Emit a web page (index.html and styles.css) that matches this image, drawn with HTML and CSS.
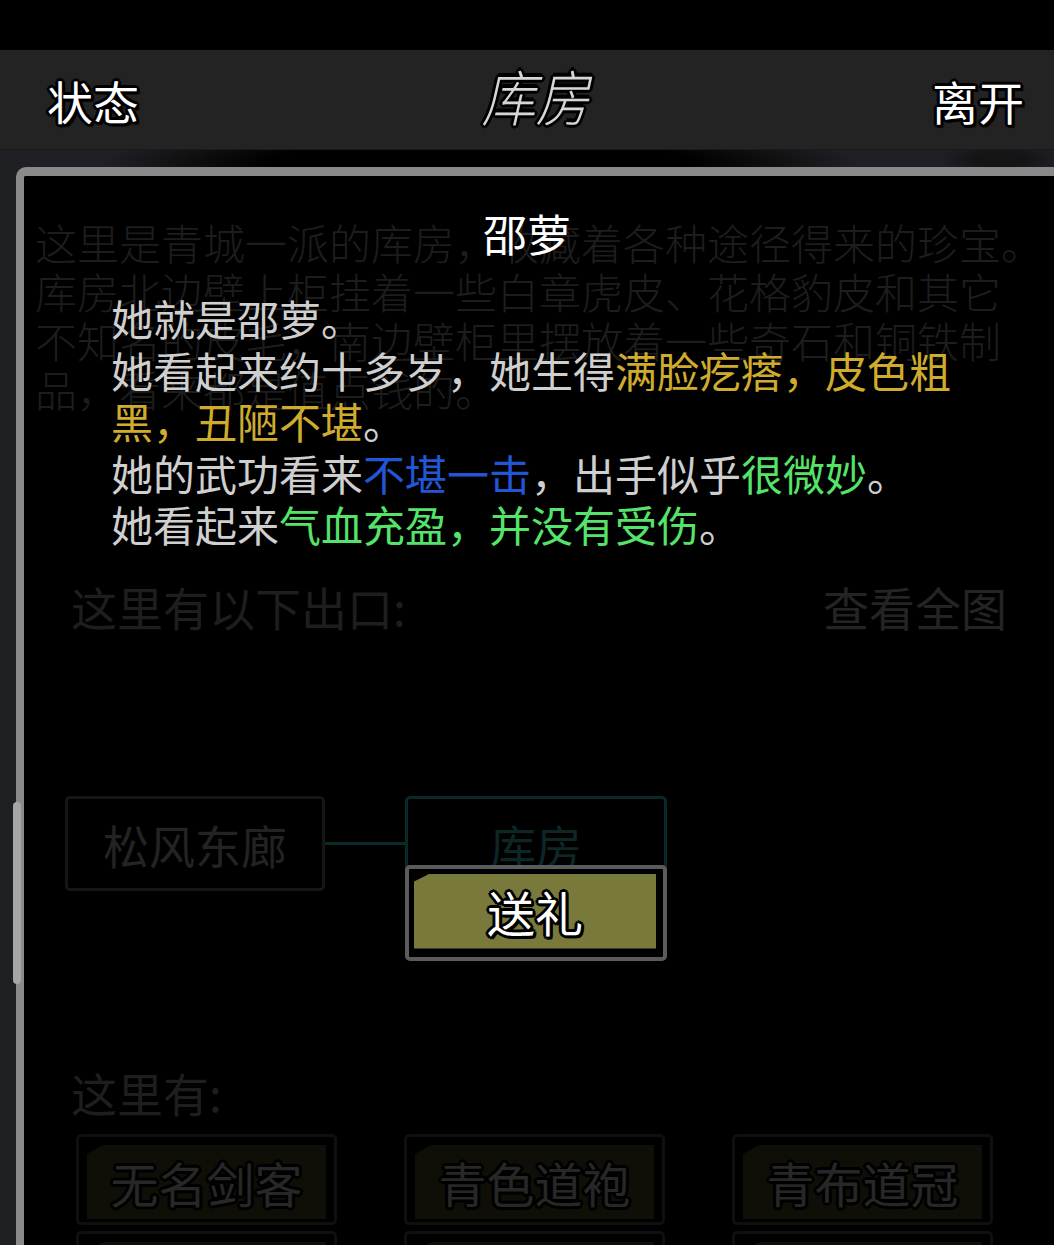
FILE: index.html
```html
<!DOCTYPE html>
<html lang="zh-CN">
<head>
<meta charset="utf-8">
<title>库房</title>
<link rel="stylesheet" href="styles.css">
</head>
<body>
<div class="screen">
  <div class="statusbar"></div>
  <header class="topbar">
    <span class="nav-btn">状态</span>
    <span class="room-title">库房</span>
    <span class="nav-btn">离开</span>
  </header>
  <main class="panel">
    <div class="scroll-thumb"></div>
    <p class="desc">这里是青城一派的库房，收藏着各种途径得来的珍宝。<br>库房北边壁上柜挂着一些白章虎皮、花格豹皮和其它<br>不知名的皮毛，南边壁柜里摆放着一些奇石和铜铁制<br>品，看来都是值点钱的。</p>
    <div class="exits"><span>这里有以下出口:</span><span class="fullmap">查看全图</span></div>
    <div class="map">
      <div class="map-room">松风东廊</div>
      <div class="map-link"></div>
      <div class="map-room current">库房</div>
    </div>
    <div class="here">这里有:</div>
    <div class="items">
      <div class="item"><div class="item-face">无名剑客</div></div>
      <div class="item"><div class="item-face">青色道袍</div></div>
      <div class="item"><div class="item-face">青布道冠</div></div>
      <div class="item"><div class="item-face">&nbsp;</div></div>
      <div class="item"><div class="item-face">&nbsp;</div></div>
      <div class="item"><div class="item-face">&nbsp;</div></div>
    </div>
  </main>
  <div class="modal">
    <div class="modal-title">邵萝</div>
    <p class="modal-text">她就是邵萝。<br>她看起来约十多岁，她生得<span class="y">满脸疙瘩，皮色粗黑，丑陋不堪</span>。<br>她的武功看来<span class="b">不堪一击</span>，出手似乎<span class="g">很微妙</span>。<br>她看起来<span class="g">气血充盈，并没有受伤</span>。</p>
    <div class="modal-actions">
      <div class="btn"><div class="btn-face">送礼</div></div>
    </div>
  </div>
</div>
</body>
</html>
```
FILE: styles.css
```css
html, body {
  margin: 0;
  padding: 0;
  background: #1f2024;
}
.screen {
  position: relative;
  width: 1054px;
  height: 1245px;
  overflow: hidden;
  font-family: "Noto Sans CJK SC", "Noto Sans", sans-serif;
  background:
    radial-gradient(ellipse 380px 40px at 480px 162px, #000 55%, rgba(0,0,0,0) 100%),
    radial-gradient(ellipse 60px 20px at 1000px 160px, #141417 40%, rgba(0,0,0,0) 100%),
    #1f2024;
}
.statusbar {
  height: 50px;
  background: #000;
}
.topbar {
  height: 100px;
  box-sizing: border-box;
  background: #232323;
  border-bottom: 1px solid #1a1a1a;
  display: flex;
  align-items: center;
  justify-content: space-between;
  padding: 0 30px 0 47px;
}
.nav-btn {
  font-size: 46px;
  line-height: 56px;
  color: #fff;
  text-shadow:
    3px 0 0 #000, -3px 0 0 #000, 0 3px 0 #000, 0 -3px 0 #000,
    2px 2px 0 #000, -2px -2px 0 #000, 2px -2px 0 #000, -2px 2px 0 #000,
    3px 3px 1px #000;
}
.room-title {
  font-size: 54px;
  line-height: 60px;
  font-weight: 300;
  font-style: italic;
  color: #d6d6d6;
  transform: translateY(-5px) scaleY(1.12);
  text-shadow:
    3px 0 0 #000, -3px 0 0 #000, 0 3px 0 #000, 0 -3px 0 #000,
    2px 2px 0 #000, -2px -2px 0 #000, 2px -2px 0 #000, -2px 2px 0 #000;
}
.panel {
  position: relative;
  display: block;
  margin: 17px 0 0 16px;
  width: 1050px;
  height: 1200px;
  background: #000;
  border-top: 9px solid #8a8a8a;
  border-left: 8px solid #8a8a8a;
  border-top-left-radius: 10px;
}
.scroll-thumb {
  position: absolute;
  left: -11px;
  top: 626px;
  width: 8px;
  height: 182px;
  border-radius: 4px;
  background: #a6a6a6;
}
.desc {
  margin: 0;
  padding: 41px 0 0 11px;
  font-size: 42px;
  line-height: 49px;
  font-weight: 300;
  color: #1d1d1d;
  white-space: nowrap;
}
.exits {
  margin-top: 165px;
  display: flex;
  justify-content: space-between;
  padding: 0 67px 0 47px;
  font-size: 46px;
  line-height: 56px;
  color: #1e1e1e;
}
.fullmap {
  color: #242424;
}
.map {
  margin-top: 162px;
  display: flex;
  align-items: center;
  padding-left: 41px;
}
.map-room {
  width: 260px;
  height: 95px;
  box-sizing: border-box;
  border: 3px solid #161616;
  border-radius: 5px;
  display: flex;
  align-items: center;
  justify-content: center;
  font-size: 46px;
  color: #232323;
}
.map-room.current {
  width: 262px;
  border-color: #0b2828;
  color: #0d2626;
}
.map-link {
  width: 80px;
  height: 3px;
  background: #0b2a2a;
}
.here {
  margin-top: 173px;
  padding-left: 47px;
  font-size: 46px;
  line-height: 56px;
  color: #1e1e1e;
}
.items {
  margin-top: 14px;
  padding-left: 52px;
  display: grid;
  grid-template-columns: repeat(3, 261px);
  column-gap: 67px;
  row-gap: 6px;
}
.item {
  height: 91px;
  box-sizing: border-box;
  border: 3px solid #0f0f0f;
  border-radius: 5px;
  padding: 8px 8px 3px 8px;
}
.item-face {
  height: 100%;
  background: #0f0f08;
  clip-path: polygon(16px 0, 100% 0, 100% 100%, 0 100%, 0 9px);
  display: flex;
  align-items: center;
  justify-content: center;
  font-size: 48px;
  color: #272727;
  text-shadow:
    3px 0 0 #000, -3px 0 0 #000, 0 3px 0 #000, 0 -3px 0 #000,
    2px 2px 0 #000, -2px -2px 0 #000, 2px -2px 0 #000, -2px 2px 0 #000;
}
.modal {
  position: absolute;
  top: 177px;
  left: 0;
  width: 1054px;
  bottom: 0;
}
.modal-title {
  padding-top: 30px;
  text-align: center;
  font-size: 44px;
  line-height: 52px;
  color: #fff;
}
.modal-text {
  margin: 33px 0 0 111px;
  width: 860px;
  font-size: 42px;
  line-height: 51.5px;
  color: #cfcfcf;
}
.y { color: #cfab2e; }
.b { color: #2157d6; }
.g { color: #55e46a; }
.modal-actions {
  margin-top: 315px;
  padding-left: 405px;
}
.btn {
  width: 262px;
  height: 96px;
  box-sizing: border-box;
  border: 4px solid #5b5b5b;
  border-radius: 5px;
  background: #000;
  padding: 5px 7px 8px 5px;
}
.btn-face {
  height: 100%;
  background: #79793b;
  clip-path: polygon(16px 0, 100% 0, 100% 100%, 0 100%, 0 8px);
  display: flex;
  align-items: center;
  justify-content: center;
  font-size: 48px;
  line-height: 1;
  color: #fff;
  text-shadow:
    3px 0 0 #000, -3px 0 0 #000, 0 3px 0 #000, 0 -3px 0 #000,
    2px 2px 0 #000, -2px -2px 0 #000, 2px -2px 0 #000, -2px 2px 0 #000,
    3px 2px 0 #000, 2px 3px 0 #000;
}
```
